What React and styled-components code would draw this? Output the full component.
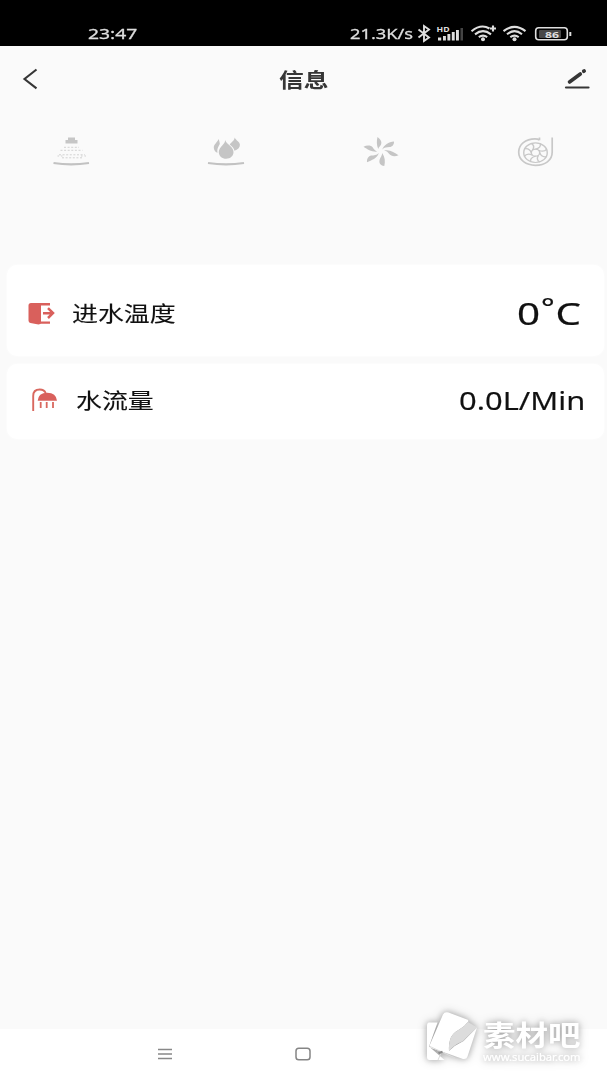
import styled, { createGlobalStyle } from "styled-components";

const GlobalStyle = createGlobalStyle`
  * {
    box-sizing: border-box;
  }

  body {
    margin: 0;
    background: #fafafa;
    font-family: "Noto Sans", "Noto Sans CJK SC", sans-serif;
  }
`;

const Screen = styled.div`
  display: flex;
  flex-direction: column;
  width: 607px;
  height: 1080px;
  background: #fafafa;
  overflow: hidden;
`;

const StatusBar = styled.header`
  display: flex;
  align-items: flex-start;
  justify-content: space-between;
  height: 46px;
  padding: 23px 34px 0 88px;
  background: #000;
  color: #dedede;
`;

const StatusIcons = styled.div`
  display: flex;

  & svg {
    margin-left: 3px;
  }
`;

/* Wide lettering: the box keeps its final width, the glyphs are stretched into it */
const WideText = styled.span`
  display: flex;
  justify-content: ${(props) => (props.$end ? "flex-end" : "flex-start")};
  width: ${(props) => props.$width}px;
  font-size: ${(props) => props.$size}px;
  font-weight: ${(props) => props.$weight || 400};
  line-height: ${(props) => props.$line}px;
  white-space: nowrap;
  -webkit-text-stroke: ${(props) => props.$stroke || 0}px currentColor;

  & > span {
    transform: scaleX(${(props) => props.$stretch});
    transform-origin: ${(props) => (props.$end ? "right" : "left")} center;
  }
`;

const Degree = styled.span`
  display: inline-block;
  width: 12px;
  font-size: 25px;
  line-height: 1;
  text-align: center;
  vertical-align: 8px;
`;

const TitleBar = styled.div`
  display: flex;
  align-items: center;
  justify-content: space-between;
  height: 66px;
  padding: 2px 17px 0 22px;
  color: #363636;
`;

const Title = styled.h1`
  margin: 0 0 0 4px;
  padding-top: 2px;
`;

const ModeRow = styled.div`
  display: flex;
  justify-content: space-between;
  height: 153px;
  padding: 22px 51px 0 51px;
`;

const CardList = styled.main`
  display: flex;
  flex-direction: column;
  flex: 1;
  gap: 8px;
  padding: 0 3px 0 7px;
`;

const Card = styled.section`
  display: flex;
  align-items: center;
  height: ${(props) => props.$height}px;
  padding: ${(props) => props.$padding};
  border-radius: 10px;
  background: #fff;
  box-shadow: 0 0 3px #fff;
  color: #111;
`;

const CardLabel = styled.div`
  flex: 1;
  margin-left: ${(props) => props.$gap}px;
`;

const NavBar = styled.footer`
  display: flex;
  height: 51px;
  padding: 15px 0 0 157px;
  background: #fff;
`;

const NavItem = styled.div`
  width: 138px;
`;

const Watermark = styled.div`
  position: absolute;
  left: 417px;
  top: 1002px;
  display: flex;
  width: 190px;
  height: 74px;
  color: #fff;
  filter: drop-shadow(0 0 3px rgba(0, 0, 0, 0.22)) drop-shadow(0 0 5px rgba(0, 0, 0, 0.22));
`;

const WatermarkText = styled.div`
  display: flex;
  flex-direction: column;
  padding: 17px 0 0;
`;

function Wide({ children, ...props }) {
  return (
    <WideText {...props}>
      <span>{children}</span>
    </WideText>
  );
}

function StatusGlyphs() {
  return (
    <svg width="157" height="20" viewBox="416 23 157 20" fill="none" stroke="#dedede">
      <path d="M418.5 29.500l10.500 8-5 3.500V26l5 3.500-10.500 8" strokeWidth="1.900" />
      <g fill="#dedede" stroke="none">
        <path d="M438 37.500h3.200v3H438zM443 36h2.900v4.500H443zM447.400 34h2.900v6.500h-2.900zM451.800 32h2.900v8.500h-2.900zM456 30h2.900v10.500H456z" />
        <path d="M460.5 28h2.5v12.5h-2.5z" fill="#444" />
        <circle cx="483" cy="39.2" r="2" />
        <circle cx="514.5" cy="39.2" r="2" />
        <text x="436.5" y="32" fontSize="7" fontWeight="700" textLength="13" lengthAdjust="spacingAndGlyphs">
          HD
        </text>
        <rect x="539" y="30" width="22" height="8" rx="1" fill="#484848" />
        <text x="545" y="37.5" fontSize="9.5" fontWeight="700" textLength="14" lengthAdjust="spacingAndGlyphs">
          86
        </text>
      </g>
      <g strokeWidth="2.100">
        <path d="M471.5 31.200Q481 23.500 489.500 28.500M475 34.300q8-6.200 16 0M478.800 37.100q4.200-3 8.400 0M490 28.500h6M493 25.500v6" />
        <path d="M503.5 31.200q11-8.600 22 0M507 34.300q7.500-6.200 15 0M510.300 37.100q4.200-3 8.400 0" />
      </g>
      <rect x="535.7" y="27.8" width="31.6" height="12" rx="3" strokeWidth="1.600" />
      <path d="M570.3 32v4" strokeWidth="2" />
    </svg>
  );
}

function BackIcon() {
  return (
    <svg width="18" height="24" viewBox="22 68 18 24" fill="none" stroke="#363636" strokeWidth="2.100">
      <path d="M36.5 69.500L24.500 79l12 9.300" />
    </svg>
  );
}

function EditIcon() {
  return (
    <svg width="28" height="24" viewBox="562 68 28 24" fill="none" stroke="#363636" strokeLinecap="round">
      <path d="M569.500 82L580.300 74" strokeWidth="3.600" />
      <path d="M583.800 71.200l.3-.2" strokeWidth="3.800" />
      <path d="M566 87.500h22.500" strokeWidth="2.200" />
    </svg>
  );
}

function SprayIcon() {
  return (
    <svg width="40" height="34" viewBox="51 134 40 34" fill="none" stroke="#d2d2d2">
      <path d="M68 137.500h7v2.500h2.500v3.500H65.500V140H68z" fill="#c6c6c6" stroke="none" />
      <path d="M64 147.300h15M60.500 150.300h22M59 154.800h26M62 157.800h20" strokeWidth="1" strokeDasharray="2 1.600" />
      <path d="M57.500 156h5M81 156h6" strokeWidth="1" strokeDasharray="1.500 2" />
      <path d="M53.500 163q17.500 2.800 35.500 0" stroke="#c2c2c2" strokeWidth="2.200" />
    </svg>
  );
}

function FlameIcon() {
  return (
    <svg width="40" height="34" viewBox="206 134 40 34">
      <g fill="#c5c5c5">
        <path d="M218.500 139c-.5 3-5 5-4.700 9 .2 2.500 2 4.300 3.700 4.800-.8-4.500 1.500-6.500 2.300-9-.2-2-.6-3.500-1.300-4.800z" />
        <path d="M225 140c1 3.500-6.200 7-6.200 12 0 4.200 3.300 6.800 7.400 6.800s7.300-2.700 7.300-6.700c0-5.400-5.800-6.600-8.500-12.100z" />
        <path d="M234.500 137.500c.5 2.600-2.900 4.400-4.800 7 3 2.200 4.500 4.500 4.700 6.300 3.300-1.100 5.600-3.200 5.500-6.100-.1-3-3.600-4-5.400-7.200z" />
      </g>
      <path d="M208 163q18 2.800 36 0" fill="none" stroke="#c2c2c2" strokeWidth="2.200" />
    </svg>
  );
}

function FanIcon() {
  return (
    <svg width="40" height="34" viewBox="361 134 40 34" fill="#c5c5c5">
      <path d="M377.500 137c3.500 2.500 4.800 5.500 3.300 8-.9 1.500-2.300 2.500-2.600 4-1.600-4-1.700-8-.7-12z" />
      <path d="M394 141.500c.2 3.200-1.700 5.300-4.500 5.600-2.800.3-5 .1-7.200 2.400 1.300-4.500 6.500-7.400 11.700-8z" />
      <path d="M398.500 155.200c-3.500 1.900-7.500 1.200-9.500-1.400-1.500-1.900-2.500-2.800-5-3.300 6-1.400 10.300 1.900 14.500 4.700z" />
      <path d="M384.300 166c-4.300-.5-5.600-3.200-4.600-6.500.6-2.100 2.500-3.800 2.500-6.500 2.900 4.400 3.200 8.500 2.100 13z" />
      <path d="M367 162.300c-.3-3.500 1.400-6.200 4.300-6.700 2.600-.5 5.200-.2 7.500-2.700-1.800 5.700-7 6.900-11.800 9.400z" />
      <path d="M363.500 146.700c3.700-1.700 7.500-1.400 9.300.9 1.100 1.600 2 3 4.500 4-5.700.5-9.500-2.200-13.800-4.900z" />
    </svg>
  );
}

function TurbineIcon() {
  const angles = [0, 45, 90, 135, 180, 225, 270, 315];
  return (
    <svg width="40" height="34" viewBox="516 134 40 34" fill="none" stroke="#c8c8c8">
      <path
        d="M539.500 140.200c-1-.8-2.500-1.300-4.500-1.300-9.500 0-16.300 5.600-16.300 13.100 0 8 7.300 13.300 16.800 13.300S552.200 160.500 552.200 152V137.500M539.500 137.500v2.800"
        strokeWidth="1.700"
      />
      <g transform="translate(535.500 152.700) scale(1.200 1)">
        <circle r="9.800" strokeWidth="1.200" />
        <circle r="3.500" strokeWidth="1.200" />
        {angles.map((angle) => (
          <path key={angle} d="M0-3.500Q5-5 4-9.300" strokeWidth="1.200" transform={`rotate(${angle})`} />
        ))}
      </g>
    </svg>
  );
}

function InletIcon() {
  return (
    <svg width="28" height="24" viewBox="27 301 28 24" fill="#d9605c">
      <path d="M31 303h19v2.500h-9v16h9v2.300h-9l-2.500.7-8-1.500q-2-.4-2-2.500v-15q0-2.500 2.500-2.500z" />
      <path d="M43 313.200h9M48 308.200l5 4.900-5 4.900" fill="none" stroke="#d9605c" strokeWidth="2.500" />
    </svg>
  );
}

function ShowerIcon() {
  return (
    <svg width="28" height="26" viewBox="31 387 28 26" fill="none" stroke="#d9685f">
      <path d="M33.200 411V396q0-6.500 6.500-6.500 4.500 0 6 3.500" strokeWidth="1.900" />
      <path d="M37.700 400.700q.5-8 9.500-8t9.800 8z" fill="#d9605c" stroke="none" />
      <path d="M40.700 402v6M46.700 402v6M53 402v6" strokeWidth="1.800" />
    </svg>
  );
}

function WatermarkLogo() {
  return (
    <svg width="66" height="60" viewBox="417 1002 66 60">
      <g fill="#fff">
        <path d="M429 1022.500h8.500l-8.500 24 15.500 13.500h-15q-2.500 0-2.500-3v-31q0-3.500 2-3.500z" />
        <path d="M448.500 1012.500l18.500 7q2 .8 1 2.300-3 4.200-8 7.200-9 5-10 11-1.500 5-1 11 5-5.500 11-8 4-1.500 6-4.500 5-5 11-11l-9.500 29q-1 3-4.500 2.500l-14-5-18-6q-2-1-1-3.500l13-30q1.500-3 5.500-2z" />
      </g>
      <path d="M449 1051q-.5-6 1-11 1-6 10-11 5-3 8-7l9 5.500q-6 5.500-11 10.500-2 3-6 4.500-6 2.500-11 8.500z" fill="#dcdcdc" />
      <path d="M430 1046.500l25 11.500M441 1053l-3 7" stroke="#dcdcdc" fill="none" />
      <path d="M438.500 1053.300l4-1.500" stroke="#8a8a8a" strokeWidth="2.200" />
    </svg>
  );
}

export default function App() {
  return (
    <Screen>
      <GlobalStyle />
      <StatusBar>
        <Wide $width={60} $size={14.5} $line={21} $stroke={0.3} $stretch={1.33}>
          23:47
        </Wide>
        <StatusIcons>
          <Wide $width={63} $size={14.5} $line={21} $stroke={0.3} $stretch={1.26}>
            21.3K/s
          </Wide>
          <StatusGlyphs />
        </StatusIcons>
      </StatusBar>

      <TitleBar>
        <BackIcon />
        <Title>
          <Wide $width={49} $size={20} $line={24} $weight={700} $stretch={1.24}>
            信息
          </Wide>
        </Title>
        <EditIcon />
      </TitleBar>

      <ModeRow>
        <SprayIcon />
        <FlameIcon />
        <FanIcon />
        <TurbineIcon />
      </ModeRow>

      <CardList>
        <Card $height={91} $padding="4px 23px 0 20px">
          <InletIcon />
          <CardLabel $gap={17}>
            <Wide $width={104} $size={21} $line={30} $stroke={0.1} $stretch={1.235}>
              进水温度
            </Wide>
          </CardLabel>
          <Wide $end $width={66} $size={31.5} $line={40} $stroke={0.2} $stretch={1.28}>
            0<Degree>°</Degree>C
          </Wide>
        </Card>
        <Card $height={75} $padding="0 19px 3px 24px">
          <ShowerIcon />
          <CardLabel $gap={17}>
            <Wide $width={80} $size={21} $line={30} $stroke={0.1} $stretch={1.235}>
              水流量
            </Wide>
          </CardLabel>
          <Wide $end $width={126} $size={25.5} $line={34} $stroke={0.15} $stretch={1.21}>
            0.0L/Min
          </Wide>
        </Card>
      </CardList>

      <NavBar>
        <NavItem>
          <svg width="16" height="14" fill="none" stroke="#888" strokeWidth="1.300">
            <path d="M1 2.500h14M1 7h14M1 11.500h14" />
          </svg>
        </NavItem>
        <NavItem>
          <svg width="16" height="14" fill="none" stroke="#858585" strokeWidth="1.500">
            <rect x="1" y="1.200" width="14" height="11.500" rx="2.800" />
          </svg>
        </NavItem>
      </NavBar>

      <Watermark>
        <WatermarkLogo />
        <WatermarkText>
          <Wide $width={100} $size={28} $line={33} $weight={700} $stretch={1.16}>
            素材吧
          </Wide>
          <Wide $width={100} $size={11} $line={9} $stroke={0.2} $stretch={1.02}>
            www.sucaibar.com
          </Wide>
        </WatermarkText>
      </Watermark>
    </Screen>
  );
}
